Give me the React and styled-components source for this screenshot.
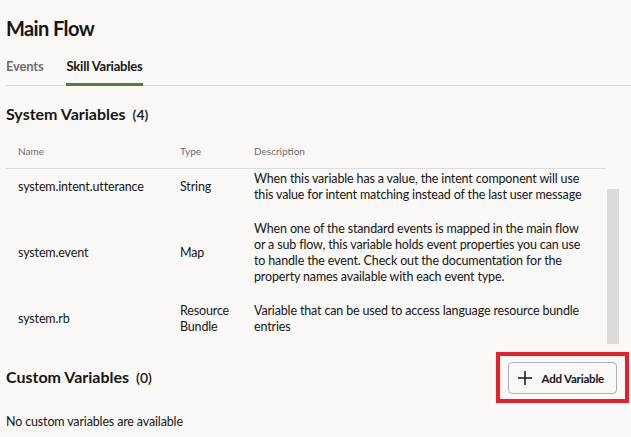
import React from "react";
import styled, { createGlobalStyle } from "styled-components";

const Global = createGlobalStyle`
    body {
        margin: 0;
        background: #faf9f8;
        font-family: Lato, "Noto Sans", sans-serif;
        color: #161513;
    }
`;

const Page = styled.div`
    width: 631px;
    height: 437px;
    overflow: hidden;
    padding: 0 0 0 6px;
    box-sizing: border-box;
`;

const Title = styled.h1`
    margin: 0;
    padding-top: 16px;
    font-size: 20px;
    line-height: 24px;
    font-weight: 700;
    letter-spacing: -0.6px;
`;

const Tabs = styled.div`
    display: flex;
    gap: 23px;
    margin-top: 18px;
    border-bottom: 1px solid #dedcda;
`;

const Tab = styled.div`
    font-size: 13px;
    font-weight: 700;
    line-height: 16px;
    letter-spacing: -0.2px;
    padding-bottom: 9px;
    color: ${(p) => (p.$active ? "#161513" : "#6f6c6a")};
    border-bottom: 3px solid ${(p) => (p.$active ? "#5a7a44" : "transparent")};
    margin-bottom: -1px;
`;

const SectionHead = styled.div`
    display: flex;
    align-items: center;
    justify-content: space-between;
    margin-top: ${(p) => p.$top}px;
    padding-right: 2px;
`;

const SectionTitle = styled.h2`
    margin: 0;
    font-size: 16px;
    line-height: 20px;
    font-weight: 700;
    display: flex;
    align-items: baseline;
    gap: 7px;
`;

const Count = styled.span`
    font-size: 14px;
    font-weight: 600;
`;

const Table = styled.div`
    margin-top: 10px;
    width: 613px;
`;

const cols = "162px 74px 1fr";

const HeadRow = styled.div`
    display: grid;
    grid-template-columns: ${cols};
    width: 600px;
    font-size: 10px;
    line-height: 12px;
    color: #6f6c6a;
    padding: 10px 0 11px;
    border-bottom: 1px solid #dedcda;
`;

const Body = styled.div`
    display: flex;
`;

const Rows = styled.div`
    width: 600px;
`;

const Row = styled.div`
    display: grid;
    grid-template-columns: ${cols};
    align-items: center;
    font-size: 12.5px;
    letter-spacing: -0.15px;
    line-height: 16px;
    padding: 9px 0;
    &:first-child {
        padding-top: 2px;
    }
`;

const Cell = styled.div`
    padding: 0 ${(p) => (p.$wide ? 18 : 12)}px 0 12px;
`;

const ScrollTrack = styled.div`
    width: 12px;
    margin-left: 1px;
    padding-top: 20px;
    display: flex;
    flex-direction: column;
`;

const Thumb = styled.div`
    flex: 1;
    background: #dcdbd9;
`;

const Highlight = styled.div`
    border: 4px solid #e8202a;
    padding: 6px 8px 5px;
`;

const Button = styled.button`
    display: flex;
    align-items: center;
    gap: 9px;
    height: 32px;
    padding: 0 12px 0 8px;
    border: 1px solid #b3b1af;
    border-radius: 4px;
    background: #faf9f8;
    font-family: inherit;
    font-size: 11.5px;
    letter-spacing: -0.2px;
    font-weight: 700;
    color: #161513;
`;

const Empty = styled.p`
    margin: 11px 0 0;
    font-size: 12.5px;
    letter-spacing: -0.15px;
    line-height: 16px;
`;

const rows = [
    {
        name: "system.intent.utterance",
        type: "String",
        desc: "When this variable has a value, the intent component will use this value for intent matching instead of the last user message",
    },
    {
        name: "system.event",
        type: "Map",
        desc: "When one of the standard events is mapped in the main flow or a sub flow, this variable holds event properties you can use to handle the event. Check out the documentation for the property names available with each event type.",
    },
    {
        name: "system.rb",
        type: "Resource Bundle",
        desc: "Variable that can be used to access language resource bundle entries",
    },
];

export default function App() {
    return (
        <Page>
            <Global />
            <Title>Main Flow</Title>
            <Tabs>
                <Tab>Events</Tab>
                <Tab $active>Skill Variables</Tab>
            </Tabs>
            <SectionHead $top={18}>
                <SectionTitle>
                    System Variables <Count>(4)</Count>
                </SectionTitle>
            </SectionHead>
            <Table>
                <HeadRow>
                    <Cell>Name</Cell>
                    <Cell>Type</Cell>
                    <Cell>Description</Cell>
                </HeadRow>
                <Body>
                    <Rows>
                        {rows.map((r) => (
                            <Row key={r.name}>
                                <Cell>{r.name}</Cell>
                                <Cell>{r.type}</Cell>
                                <Cell $wide>{r.desc}</Cell>
                            </Row>
                        ))}
                    </Rows>
                    <ScrollTrack>
                        <Thumb />
                    </ScrollTrack>
                </Body>
            </Table>
            <SectionHead $top={8}>
                <SectionTitle>
                    Custom Variables <Count>(0)</Count>
                </SectionTitle>
                <Highlight>
                    <Button>
                        <svg width="16" height="16" viewBox="0 0 16 16">
                            <path d="M8 1v14M1 8h14" stroke="#161513" strokeWidth="1.5" fill="none" />
                        </svg>
                        Add Variable
                    </Button>
                </Highlight>
            </SectionHead>
            <Empty>No custom variables are available</Empty>
        </Page>
    );
}
